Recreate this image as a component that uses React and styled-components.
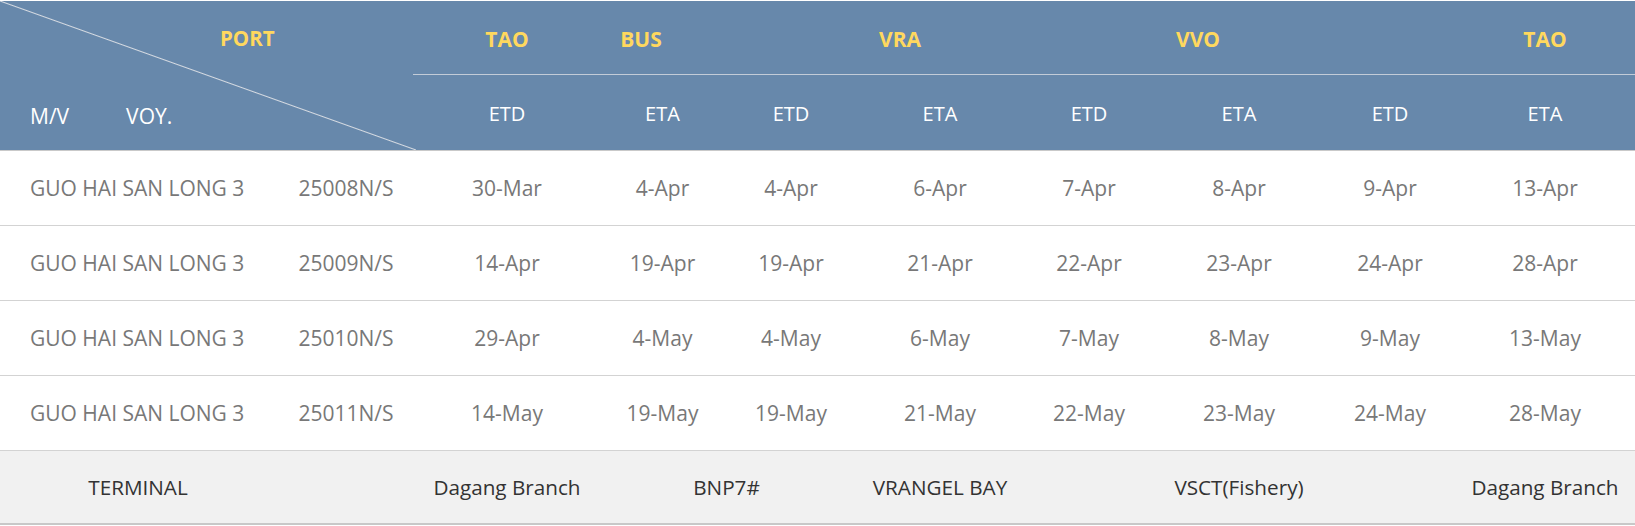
import React from "react";
import styled, { createGlobalStyle } from "styled-components";

const Global = createGlobalStyle`
  html, body { margin: 0; padding: 0; background: #ffffff; }
  body { font-family: "Open Sans", "Noto Sans", sans-serif; }
`;

const COLS = "276px 140px 182px 129px 128px 170px 128px 172px 130px 1fr";
const DATA_COLS = "182px 129px 128px 170px 128px 172px 130px 1fr";

const Table = styled.div`
  width: 1635px;
  padding-top: 1px;
`;

const Header = styled.div`
  display: grid;
  grid-template-columns: 416px 1fr;
  height: 149px;
  background: #6788ab;
  border-bottom: 1px solid #c9c9c9;
`;

const Corner = styled.div`
  display: grid;
  grid-template-rows: 74px 1fr;
  background: linear-gradient(
    to top right,
    transparent calc(50% - 1px),
    #d6dbe2 50%,
    transparent calc(50% + 1px)
  );
`;

const CornerTop = styled.div`
  display: flex;
  align-items: center;
  padding-left: 220px;
`;

const CornerBottom = styled.div`
  display: flex;
  align-items: center;
  gap: 57px;
  padding: 7px 0 0 30px;
`;

const Port = styled.span`
  color: #ffd85e;
  font-weight: 700;
  font-size: 20.5px;
`;

const HeadLabel = styled.span`
  color: #ffffff;
  font-size: 21px;
`;

const HeadRight = styled.div`
  display: grid;
  grid-template-rows: 74px 1fr;
`;

const PortRow = styled.div`
  display: grid;
  grid-template-columns: 182px 86px 432px 164px 175px 1fr;
  border-bottom: 1px solid #c3ccd8;
  margin-left: -3px;
  padding-left: 3px;
`;

const PortCell = styled.div`
  display: flex;
  align-items: center;
  justify-content: center;
  grid-column: ${(p) => p.$col};
  color: #ffd85e;
  font-weight: 700;
  font-size: 21px;
  padding-top: 2px;
`;

const SubRow = styled.div`
  display: grid;
  grid-template-columns: ${DATA_COLS};
`;

const SubCell = styled.div`
  display: flex;
  align-items: center;
  justify-content: center;
  color: #ffffff;
  font-size: 20px;
  padding-top: 2px;
`;

const Row = styled.div`
  display: grid;
  grid-template-columns: ${COLS};
  height: 74px;
  border-bottom: 1px solid #d3d3d3;
  background: #ffffff;
`;

const Cell = styled.div`
  display: flex;
  align-items: center;
  justify-content: ${(p) => (p.$left ? "flex-start" : "center")};
  padding-left: ${(p) => (p.$left ? "30px" : "0")};
  color: #787878;
  font-size: 21px;
  white-space: nowrap;
`;

const TerminalRow = styled.div`
  display: grid;
  grid-template-columns: ${COLS};
  height: 72px;
  background: #f1f1f1;
  border-bottom: 2px solid #c8c8c8;
`;

const TermCell = styled.div`
  display: flex;
  align-items: center;
  justify-content: center;
  grid-column: ${(p) => p.$col};
  color: #333333;
  font-size: 20.7px;
  white-space: nowrap;
`;

const subHeads = ["ETD", "ETA", "ETD", "ETA", "ETD", "ETA", "ETD", "ETA"];

const rows = [
  ["GUO HAI SAN LONG 3", "25008N/S", "30-Mar", "4-Apr", "4-Apr", "6-Apr", "7-Apr", "8-Apr", "9-Apr", "13-Apr"],
  ["GUO HAI SAN LONG 3", "25009N/S", "14-Apr", "19-Apr", "19-Apr", "21-Apr", "22-Apr", "23-Apr", "24-Apr", "28-Apr"],
  ["GUO HAI SAN LONG 3", "25010N/S", "29-Apr", "4-May", "4-May", "6-May", "7-May", "8-May", "9-May", "13-May"],
  ["GUO HAI SAN LONG 3", "25011N/S", "14-May", "19-May", "19-May", "21-May", "22-May", "23-May", "24-May", "28-May"],
];

const terminals = [
  { col: "1", text: "TERMINAL" },
  { col: "3", text: "Dagang Branch" },
  { col: "4 / span 2", text: "BNP7#" },
  { col: "6", text: "VRANGEL BAY" },
  { col: "8", text: "VSCT(Fishery)" },
  { col: "10", text: "Dagang Branch" },
];

const ports = [
  { col: "1", text: "TAO" },
  { col: "2", text: "BUS" },
  { col: "3", text: "VRA" },
  { col: "4", text: "VVO" },
  { col: "6", text: "TAO" },
];

export default function App() {
  return (
    <>
      <Global />
      <Table>
        <Header>
          <Corner>
            <CornerTop>
              <Port>PORT</Port>
            </CornerTop>
            <CornerBottom>
              <HeadLabel>M/V</HeadLabel>
              <HeadLabel>VOY.</HeadLabel>
            </CornerBottom>
          </Corner>
          <HeadRight>
            <PortRow>
              {ports.map((p, i) => (
                <PortCell key={i} $col={p.col}>
                  {p.text}
                </PortCell>
              ))}
            </PortRow>
            <SubRow>
              {subHeads.map((h, i) => (
                <SubCell key={i}>{h}</SubCell>
              ))}
            </SubRow>
          </HeadRight>
        </Header>
        {rows.map((r, i) => (
          <Row key={i}>
            {r.map((c, j) => (
              <Cell key={j} $left={j === 0}>
                {c}
              </Cell>
            ))}
          </Row>
        ))}
        <TerminalRow>
          {terminals.map((t, i) => (
            <TermCell key={i} $col={t.col}>
              {t.text}
            </TermCell>
          ))}
        </TerminalRow>
      </Table>
    </>
  );
}
